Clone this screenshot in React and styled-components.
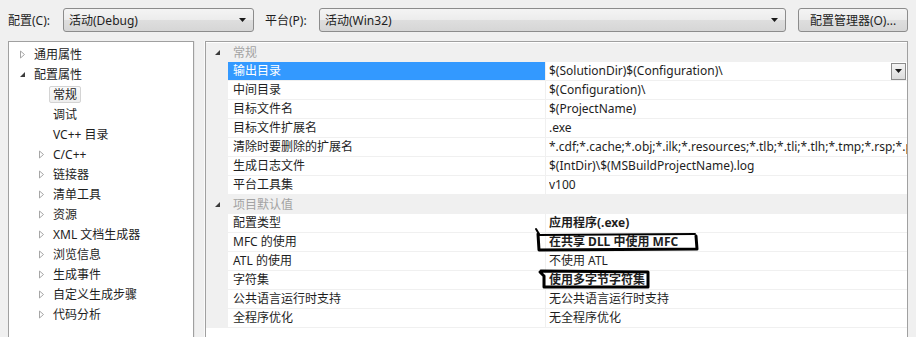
import React from 'react'
import styled, { createGlobalStyle } from 'styled-components'

const GlobalStyle = createGlobalStyle`
  html, body {
    margin: 0;
    padding: 0;
    background: #f0f0f0;
    overflow: hidden;
  }
  body {
    font-family: "Noto Sans", "Noto Sans CJK SC", sans-serif;
    font-size: 12px;
    color: #1e1e1e;
  }
`

const tree = [
  { label: '通用属性', level: 0, arrow: 'closed' },
  { label: '配置属性', level: 0, arrow: 'open' },
  { label: '常规', level: 1, current: true },
  { label: '调试', level: 1 },
  { label: 'VC++ 目录', level: 1 },
  { label: 'C/C++', level: 1, arrow: 'closed' },
  { label: '链接器', level: 1, arrow: 'closed' },
  { label: '清单工具', level: 1, arrow: 'closed' },
  { label: '资源', level: 1, arrow: 'closed' },
  { label: 'XML 文档生成器', level: 1, arrow: 'closed' },
  { label: '浏览信息', level: 1, arrow: 'closed' },
  { label: '生成事件', level: 1, arrow: 'closed' },
  { label: '自定义生成步骤', level: 1, arrow: 'closed' },
  { label: '代码分析', level: 1, arrow: 'closed' },
]

const groups = [
  {
    title: '常规',
    rows: [
      { name: '输出目录', value: '$(SolutionDir)$(Configuration)\\', selected: true },
      { name: '中间目录', value: '$(Configuration)\\' },
      { name: '目标文件名', value: '$(ProjectName)' },
      { name: '目标文件扩展名', value: '.exe' },
      { name: '清除时要删除的扩展名', value: '*.cdf;*.cache;*.obj;*.ilk;*.resources;*.tlb;*.tli;*.tlh;*.tmp;*.rsp;*.pgc;*.pgd;*.meta;$(TargetPath)' },
      { name: '生成日志文件', value: '$(IntDir)\\$(MSBuildProjectName).log' },
      { name: '平台工具集', value: 'v100' },
    ],
  },
  {
    title: '项目默认值',
    rows: [
      { name: '配置类型', value: '应用程序(.exe)', bold: true },
      { name: 'MFC 的使用', value: '在共享 DLL 中使用 MFC', bold: true },
      { name: 'ATL 的使用', value: '不使用 ATL' },
      { name: '字符集', value: '使用多字节字符集', bold: true },
      { name: '公共语言运行时支持', value: '无公共语言运行时支持' },
      { name: '全程序优化', value: '无全程序优化' },
    ],
  },
]

const Arrow = ({ kind }) =>
  kind === 'open' ? (
    <svg width="7" height="7" viewBox="0 0 7 7">
      <path d="M6 1 L6 6 L1 6 Z" fill="#3c3c3c" />
    </svg>
  ) : (
    <svg width="7" height="9" viewBox="0 0 7 9">
      <path d="M1.5 1 L5.5 4.5 L1.5 8 Z" fill="#fff" stroke="#a6a6a6" />
    </svg>
  )

const DownArrow = () => (
  <svg width="7" height="4" viewBox="0 0 7 4">
    <path d="M0 0 L7 0 L3.5 4 Z" fill="#1a1a1a" />
  </svg>
)

const App = () => {
  return (
    <Root>
      <GlobalStyle />
      <Toolbar>
        <Label $width={55}>配置(C):</Label>
        <Combo $width={191}>
          <span>活动(Debug)</span>
          <DownArrow />
        </Combo>
        <Label $width={54} $left={11}>平台(P):</Label>
        <Combo $width={467}>
          <span>活动(Win32)</span>
          <DownArrow />
        </Combo>
        <Button>配置管理器(O)...</Button>
      </Toolbar>

      <Main>
        <TreePanel>
          {tree.map((item) => (
            <TreeItem key={item.label} $level={item.level}>
              <ArrowSlot>{item.arrow && <Arrow kind={item.arrow} />}</ArrowSlot>
              <TreeText $current={item.current}>{item.label}</TreeText>
            </TreeItem>
          ))}
        </TreePanel>
        <Splitter />
        <GridPanel>
          {groups.map((g) => (
            <React.Fragment key={g.title}>
              <Gutter>
                <Arrow kind="open" />
              </Gutter>
              <GroupTitle>{g.title}</GroupTitle>
              {g.rows.map((r) => (
                <React.Fragment key={r.name}>
                  <Gutter />
                  <NameCell $selected={r.selected}>{r.name}</NameCell>
                  <ValueCell $bold={r.bold}>
                    <ValueText>{r.value}</ValueText>
                    {r.selected && (
                      <DropButton>
                        <DownArrow />
                      </DropButton>
                    )}
                  </ValueCell>
                </React.Fragment>
              ))}
            </React.Fragment>
          ))}
          <Filler />
        </GridPanel>
      </Main>

      <Marks width="916" height="337" viewBox="0 0 916 337">
        <g fill="none" stroke="#000" strokeLinecap="round" strokeLinejoin="round">
          <path d="M536 229 L539 234" strokeWidth="2" />
          <path d="M538 235 L695 234" strokeWidth="2" />
          <path d="M538 234 L539 250 L697 249 L696 236" strokeWidth="3" />
          <path d="M540 272 L544 276 L544 287 L648 287 L648 272 L541 271" strokeWidth="3" />
        </g>
      </Marks>
    </Root>
  )
}

const Root = styled.div`
  position: relative;
  width: 916px;
  height: 337px;
  overflow: hidden;
`

const Toolbar = styled.div`
  display: flex;
  align-items: center;
  height: 24px;
  padding: 8px 8px 0 8px;
`

const Label = styled.span`
  box-sizing: border-box;
  width: ${(p) => p.$width}px;
  margin-left: ${(p) => p.$left || 0}px;
  white-space: nowrap;
  color: #1e1e1e;
`

const Combo = styled.div`
  box-sizing: border-box;
  width: ${(p) => p.$width}px;
  height: 24px;
  display: flex;
  align-items: center;
  justify-content: space-between;
  padding: 0 7px 0 5px;
  border: 1px solid #8c8c8c;
  border-radius: 3px;
  background: linear-gradient(#f4f4f4 0%, #ececec 50%, #dedede 51%, #d6d6d6 100%);
  color: #1e1e1e;
`

const Button = styled.div`
  box-sizing: border-box;
  width: 110px;
  height: 24px;
  margin-left: 12px;
  display: flex;
  align-items: center;
  justify-content: center;
  border: 1px solid #8c8c8c;
  border-radius: 3px;
  background: linear-gradient(#f4f4f4 0%, #ececec 50%, #dedede 51%, #d6d6d6 100%);
  color: #1e1e1e;
`

const Main = styled.div`
  display: flex;
  padding: 9px 0 0 8px;
  height: 320px;
`

const TreePanel = styled.div`
  box-sizing: border-box;
  width: 186px;
  height: 320px;
  padding-top: 2px;
  background: #fff;
  border: 1px solid #a0a0a0;
`

const TreeItem = styled.div`
  display: flex;
  align-items: center;
  height: 20px;
  padding-left: ${(p) => 6 + p.$level * 19}px;
`

const ArrowSlot = styled.span`
  width: 15px;
  display: flex;
  align-items: center;
  justify-content: center;
`

const TreeText = styled.span`
  box-sizing: border-box;
  height: 17px;
  line-height: 15px;
  padding: 0 3px;
  border: 1px solid ${(p) => (p.$current ? '#d4d4d4' : 'transparent')};
  border-radius: 2px;
  background: ${(p) => (p.$current ? 'linear-gradient(#fafafa, #eeeeee)' : 'transparent')};
  white-space: nowrap;
`

const Splitter = styled.div`
  width: 11px;
  box-sizing: border-box;
  border-left: 1px solid #e4e4e4;
  border-right: 1px solid #fafafa;
`

const GridPanel = styled.div`
  box-sizing: border-box;
  position: relative;
  width: 703px;
  height: 320px;
  display: grid;
  grid-template-columns: 22px 318px 1fr;
  grid-auto-rows: 19px;
  align-content: start;
  padding-top: 1px;
  background: #fff;
  border: 1px solid #a0a0a0;
  border-bottom: none;
`

const Gutter = styled.div`
  background: #f0f0f0;
  display: flex;
  align-items: center;
  justify-content: center;
  padding-left: 1px;
`

const GroupTitle = styled.div`
  grid-column: span 2;
  background: #f0f0f0;
  color: #a3a3a3;
  line-height: 19px;
  padding-left: 5px;
`

const NameCell = styled.div`
  box-sizing: border-box;
  line-height: 18px;
  padding-left: 5px;
  border-bottom: 1px solid #f0f0f0;
  border-right: 1px solid #f0f0f0;
  background: ${(p) => (p.$selected ? '#3399ff' : '#fff')};
  color: ${(p) => (p.$selected ? '#fff' : '#1e1e1e')};
  white-space: nowrap;
`

const ValueCell = styled.div`
  box-sizing: border-box;
  display: flex;
  align-items: center;
  min-width: 0;
  padding-left: 3px;
  border-bottom: 1px solid #f0f0f0;
  font-weight: ${(p) => (p.$bold ? 700 : 400)};
  overflow: hidden;
`

const ValueText = styled.span`
  flex: 1;
  white-space: nowrap;
  overflow: hidden;
  line-height: 18px;
`

const DropButton = styled.span`
  box-sizing: border-box;
  width: 15px;
  height: 17px;
  margin-right: 1px;
  display: flex;
  align-items: center;
  justify-content: center;
  border: 1px solid #8c8c8c;
  background: linear-gradient(#f4f4f4, #dcdcdc);
`

const Filler = styled.div`
  grid-column: 1 / -1;
`

const Marks = styled.svg`
  position: absolute;
  left: 0;
  top: 0;
  pointer-events: none;
`

export default App
